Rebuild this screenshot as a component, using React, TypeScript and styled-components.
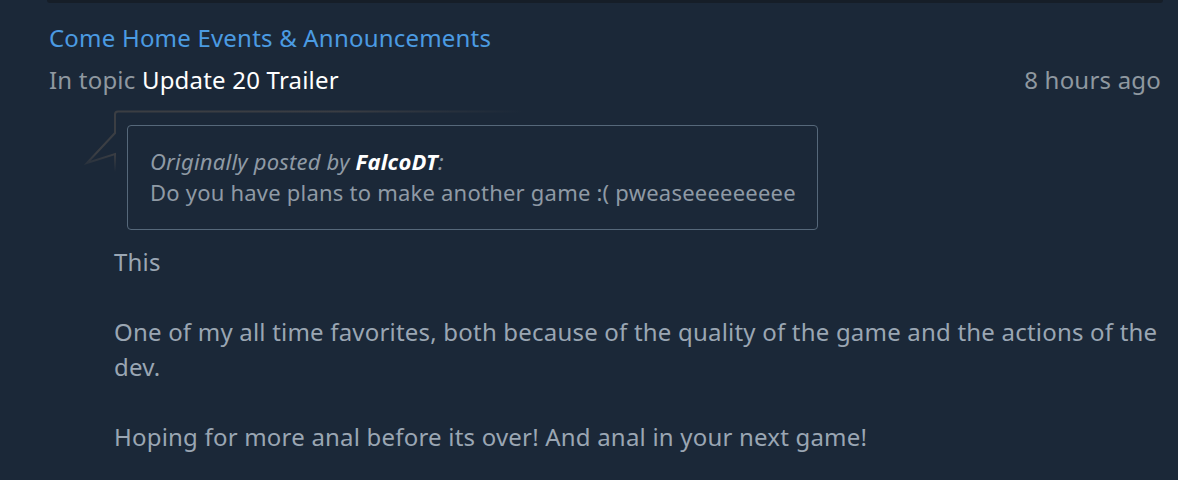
import React from "react";
import styled, { createGlobalStyle } from "styled-components";

const Global = createGlobalStyle`
  html, body { margin: 0; padding: 0; background: #1b2838; }
  body { font-family: "Noto Sans", "Open Sans", sans-serif; }
`;

const Page = styled.div`
  width: 1178px;
  height: 480px;
  overflow: hidden;
  background: #1b2838;
`;

const TopBar = styled.div`
  height: 3px;
  margin: 0 15px 0 47px;
  background: #161e28;
  border-radius: 0 0 3px 3px;
`;

const Entry = styled.div`
  padding: 19px 17px 0 49px;
  font-size: 24px;
  letter-spacing: 0.2px;
`;

const Title = styled.div`
  color: #4b9be2;
  line-height: 32px;
`;

const Meta = styled.div`
  display: flex;
  justify-content: space-between;
  align-items: baseline;
  margin-top: 10px;
  line-height: 32px;
  color: #8f98a0;
`;

const Topic = styled.span`
  color: #ffffff;
`;

const Body = styled.div`
  position: relative;
  margin-left: 65px;
  padding-top: 29px;
  color: #9aa6b3;
  line-height: 35px;
`;

const Tail = styled.svg`
  position: absolute;
  left: -30px;
  top: 14px;
  pointer-events: none;
`;

const Quote = styled.blockquote`
  margin: 0 0 14px 13px;
  width: 691px;
  box-sizing: border-box;
  border: 1px solid #56687a;
  border-radius: 4px;
  padding: 20px 10px 21px 22px;
  font-size: 22px;
  line-height: 31px;
  letter-spacing: 0.22px;
  color: #8f9aa5;
`;

const Author = styled.div`
  font-style: italic;
`;

const AuthorName = styled.b`
  color: #ffffff;
  font-weight: 700;
`;

const Para = styled.p<{ $gapBefore?: boolean }>`
  margin: ${(p) => (p.$gapBefore ? "35px" : "0")} 0 0 0;
`;

export default function App() {
  return (
    <Page>
      <Global />
      <TopBar />
      <Entry>
        <Title>Come Home Events &amp; Announcements</Title>
        <Meta>
          <span>
            In topic <Topic>Update 20 Trailer</Topic>
          </span>
          <span>8 hours ago</span>
        </Meta>
        <Body>
          <Tail width="440" height="80" viewBox="0 0 440 80">
            <defs>
              <linearGradient id="tailH" x1="0" y1="0" x2="1" y2="0">
                <stop offset="0" stopColor="#3b3e43" />
                <stop offset="0.55" stopColor="#3a3d43" />
                <stop offset="1" stopColor="#3a3d43" stopOpacity="0" />
              </linearGradient>
              <linearGradient id="tailV" x1="0" y1="0" x2="0" y2="1">
                <stop offset="0" stopColor="#3b3e43" />
                <stop offset="0.65" stopColor="#3b3e43" />
                <stop offset="1" stopColor="#3b3e43" stopOpacity="0" />
              </linearGradient>
            </defs>
            <path d="M31 10 L31 4.5 Q31 1.5 34 1.5 L440 1.5" fill="none" stroke="url(#tailH)" strokeWidth="2" />
            <path d="M31 9 L31 23 L3 53 L31 44 L31 62" fill="none" stroke="url(#tailV)" strokeWidth="2" strokeLinejoin="miter" />
          </Tail>
          <Quote>
            <Author>
              Originally posted by <AuthorName>FalcoDT</AuthorName>:
            </Author>
            <div>Do you have plans to make another game :( pweaseeeeeeeee</div>
          </Quote>
          <Para>This</Para>
          <Para $gapBefore>
            One of my all time favorites, both because of the quality of the game and the actions of the dev.
          </Para>
          <Para $gapBefore>Hoping for more anal before its over! And anal in your next game!</Para>
        </Body>
      </Entry>
    </Page>
  );
}
